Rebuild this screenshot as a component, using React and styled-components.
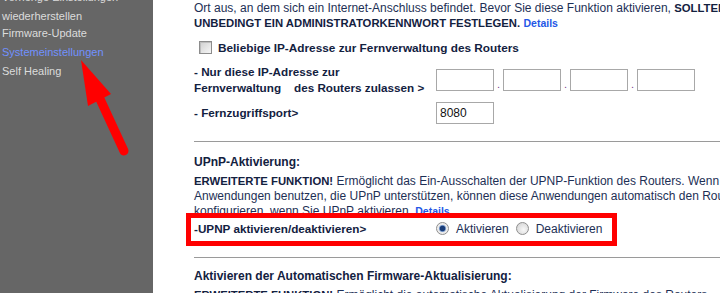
import React from 'react';
import styled, { createGlobalStyle } from 'styled-components';

const Global = createGlobalStyle`
    html, body {
        margin: 0;
        padding: 0;
        overflow: hidden;
        background: #fff;
    }
`;

const Page = styled.div`
    position: relative;
    display: flex;
    width: 720px;
    height: 293px;
    overflow: hidden;
    font-family: "Liberation Sans", Arial, sans-serif;
`;

const Sidebar = styled.div`
    width: 153px;
    flex-shrink: 0;
    background: #666666;
    padding: 0 0 0 2px;
    box-sizing: border-box;
`;

const NavList = styled.ul`
    list-style: none;
    margin: -10px 0 0 0;
    padding: 0;
    font-size: 11px;
`;

const NavItem = styled.li`
    color: ${p => (p.$active ? '#7191ff' : '#dcdcdc')};
    line-height: 14px;
    margin-bottom: ${p => p.$gap || 5}px;
    white-space: nowrap;
`;

const Content = styled.div`
    flex: 1;
    padding: 1px 0 0 41px;
    overflow: hidden;
    color: #1d2f55;
    font-size: 12px;
`;

const Para = styled.div`
    line-height: 15px;
    white-space: nowrap;
    margin-top: ${p => p.$top || 0}px;
`;

const Strong = styled.b`
    color: #13213f;
    font-size: 11.3px;
`;

const Link = styled.a`
    color: #2457e6;
    font-weight: bold;
    font-size: 10.5px;
    text-decoration: none;
`;

const CheckRow = styled.label`
    display: flex;
    align-items: center;
    gap: 6px;
    margin: 9px 0 0 5px;
    height: 15px;
    white-space: nowrap;
    font-weight: bold;
    font-size: 11.8px;
    color: #13213f;
`;

const Check = styled.span`
    width: 11px;
    height: 11px;
    border: 1px solid #8c8c8c;
    background: linear-gradient(135deg, #d0d0d0, #f6f6f6);
    box-shadow: inset 1px 1px 0 #bdbdbd;
`;

const FieldRow = styled.div`
    display: flex;
    align-items: center;
    margin-top: ${p => p.$top || 0}px;
`;

const FieldLabel = styled.div`
    width: 242px;
    flex-shrink: 0;
    font-weight: bold;
    font-size: 11.7px;
    line-height: 16px;
    color: #13213f;
    white-space: pre;
`;

const Octets = styled.div`
    display: flex;
    align-items: flex-end;
`;

const TextBox = styled.input`
    width: 58px;
    height: 22px;
    box-sizing: border-box;
    border: 1px solid #a8a8a8;
    font-family: "Liberation Sans", Arial, sans-serif;
    font-size: 12px;
    color: #111;
    padding: 2px 3px;
    margin: 0;
    outline: none;
`;

const Dot = styled.span`
    width: 9px;
    text-align: center;
    color: #7b3f8f;
    font-size: 11px;
    line-height: 14px;
`;

const Rule = styled.hr`
    border: 0;
    border-top: 1px solid #9a9a9a;
    margin: ${p => p.$top || 0}px 0 0 0;
    width: 600px;
`;

const Heading = styled.div`
    font-weight: bold;
    font-size: 12px;
    color: #13213f;
    line-height: 15px;
    white-space: nowrap;
    margin-top: ${p => p.$top || 0}px;
`;

const Highlight = styled.div`
    display: flex;
    align-items: center;
    width: 431px;
    height: 33px;
    box-sizing: border-box;
    border: 5px solid #ff0000;
    margin: -6px 0 0 -8px;
    padding: 0 0 2px 3px;
    position: relative;
`;

const Radios = styled.div`
    display: flex;
    align-items: center;
    gap: 4px;
    font-size: 12px;
    color: #1d2f55;
    white-space: nowrap;
`;

const Radio = styled.span`
    display: inline-block;
    width: 11px;
    height: 11px;
    border-radius: 50%;
    border: 1px solid #8e8e8e;
    background: ${p =>
        p.$checked
            ? 'radial-gradient(circle, #1a3d78 0 2.5px, #6c8fc4 3px, #e9e9e9 4px, #f8f8f8 100%)'
            : 'radial-gradient(circle at 60% 60%, #f8f8f8, #cfcfcf)'};
    margin: 0 3px 0 ${p => p.$offset || 0}px;
`;

const ArrowLayer = styled.svg`
    position: absolute;
    left: 0;
    top: 0;
    pointer-events: none;
`;

export default function App() {
    return (
        <Page>
            <Global />
            <Sidebar>
                <NavList>
                    <NavItem $gap={0}>Vorherige Einstellungen</NavItem>
                    <NavItem $gap={3}>wiederherstellen</NavItem>
                    <NavItem $gap={5}>Firmware-Update</NavItem>
                    <NavItem $active $gap={5}>Systemeinstellungen</NavItem>
                    <NavItem>Self Healing</NavItem>
                </NavList>
            </Sidebar>
            <Content>
                <Para>
                    Ort aus, an dem sich ein Internet-Anschluss befindet. Bevor Sie diese Funktion aktivieren, <Strong>SOLLTEN SIE</Strong>
                </Para>
                <Para>
                    <Strong>UNBEDINGT EIN ADMINISTRATORKENNWORT FESTLEGEN.</Strong> <Link href="#">Details</Link>
                </Para>
                <CheckRow>
                    <Check />
                    Beliebige IP-Adresse zur Fernverwaltung des Routers
                </CheckRow>
                <FieldRow $top={9}>
                    <FieldLabel>{'- Nur diese IP-Adresse zur\nFernverwaltung    des Routers zulassen >'}</FieldLabel>
                    <Octets>
                        <TextBox defaultValue="" />
                        <Dot>.</Dot>
                        <TextBox defaultValue="" />
                        <Dot>.</Dot>
                        <TextBox defaultValue="" />
                        <Dot>.</Dot>
                        <TextBox defaultValue="" />
                    </Octets>
                </FieldRow>
                <FieldRow $top={6}>
                    <FieldLabel>- Fernzugriffsport&gt;</FieldLabel>
                    <TextBox defaultValue="8080" />
                </FieldRow>
                <Rule $top={17} />
                <Heading $top={13}>UPnP-Aktivierung:</Heading>
                <Para $top={4}>
                    <Strong>ERWEITERTE FUNKTION!</Strong> Ermöglicht das Ein-Ausschalten der UPNP-Funktion des Routers. Wenn Sie
                </Para>
                <Para>Anwendungen benutzen, die UPnP unterstützen, können diese Anwendungen automatisch den Router</Para>
                <Para>
                    konfigurieren, wenn Sie UPnP aktivieren. <Link href="#">Details</Link>
                </Para>
                <Highlight>
                    <FieldLabel>-UPNP aktivieren/deaktivieren&gt;</FieldLabel>
                    <Radios>
                        <Radio $checked />
                        Aktivieren
                        <Radio $offset={3} />
                        Deaktivieren
                    </Radios>
                </Highlight>
                <Rule $top={11} />
                <Heading $top={11}>Aktivieren der Automatischen Firmware-Aktualisierung:</Heading>
                <Para $top={4}>
                    <Strong>ERWEITERTE FUNKTION!</Strong> Ermöglicht die automatische Aktualisierung der Firmware des Routers.
                </Para>
            </Content>
            <ArrowLayer width="160" height="170" viewBox="0 0 160 170">
                <polygon points="81,60 88,106 111,94" fill="#ff0000" />
                <line x1="100" y1="99" x2="124" y2="151" stroke="#ff0000" strokeWidth="9" strokeLinecap="round" />
            </ArrowLayer>
        </Page>
    );
}
